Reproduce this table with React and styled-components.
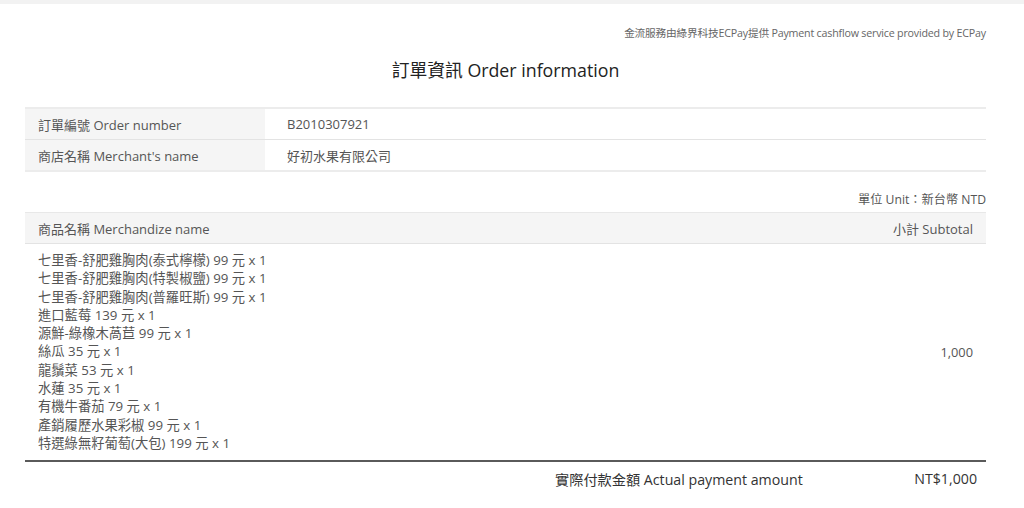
import React from 'react';
import styled, { createGlobalStyle } from 'styled-components';

const GlobalStyle = createGlobalStyle`
  html, body {
    margin: 0;
    padding: 0;
    background: #fff;
  }
  body {
    font-family: "Open Sans", "Noto Sans CJK TC", sans-serif;
    color: #555;
  }
`;

const TopBar = styled.div`
  height: 4px;
  background: #f2f2f2;
`;

const Wrapper = styled.div`
  padding: 0 38px 0 25px;
`;

const ProviderNote = styled.div`
  text-align: right;
  font-size: 10.7px;
  color: #666;
  margin-top: 22px;
  line-height: 14px;
  letter-spacing: -0.2px;
`;

const Title = styled.h1`
  margin: 18px 0 0;
  text-align: center;
  font-size: 17.8px;
  font-weight: 400;
  color: #222;
  line-height: 24px;
`;

const InfoTable = styled.div`
  margin-top: 25px;
  border-top: 2px solid #ececec;
`;

const InfoRow = styled.div`
  display: grid;
  grid-template-columns: 240px 1fr;
  height: 30px;
  border-bottom: 1px solid #e3e3e3;
  &:last-child {
    border-bottom-width: 2px;
    border-bottom-color: #ececec;
  }
`;

const InfoLabel = styled.div`
  background: #f5f5f5;
  padding-left: 13px;
  display: flex;
  align-items: center;
  font-size: 13px;
`;

const InfoValue = styled.div`
  padding-left: 22px;
  display: flex;
  align-items: center;
  font-size: 13px;
`;

const UnitNote = styled.div`
  text-align: right;
  font-size: 12.2px;
  margin-top: 20px;
  line-height: 16px;
  color: #555;
`;

const ItemHead = styled.div`
  margin-top: 4px;
  height: 30px;
  background: #f5f5f5;
  border-top: 1px solid #e8e8e8;
  border-bottom: 1px solid #e3e3e3;
  display: flex;
  justify-content: space-between;
  align-items: center;
  padding: 0 13px;
  font-size: 13px;
`;

const ItemBody = styled.div`
  display: flex;
  justify-content: space-between;
  align-items: center;
  padding: 7px 13px 8px;
  border-bottom: 2px solid #5a5a5a;
`;

const ItemList = styled.div`
  display: flex;
  flex-direction: column;
`;

const ItemLine = styled.div`
  font-size: 13.3px;
  line-height: 18.3px;
  color: #555;
`;

const Subtotal = styled.div`
  font-size: 12.8px;
  color: #555;
`;

const TotalRow = styled.div`
  display: grid;
  grid-template-columns: 1fr 250px 172px;
  align-items: center;
  height: 33px;
  padding-right: 9px;
  font-size: 14.2px;
  color: #333;
`;

const TotalLabel = styled.div`
  grid-column: 2;
`;

const TotalAmount = styled.div`
  grid-column: 3;
  text-align: right;
`;

const items = [
  '七里香-舒肥雞胸肉(泰式檸檬) 99 元 x 1',
  '七里香-舒肥雞胸肉(特製椒鹽) 99 元 x 1',
  '七里香-舒肥雞胸肉(普羅旺斯) 99 元 x 1',
  '進口藍莓 139 元 x 1',
  '源鮮-綠橡木萵苣 99 元 x 1',
  '絲瓜 35 元 x 1',
  '龍鬚菜 53 元 x 1',
  '水蓮 35 元 x 1',
  '有機牛番茄 79 元 x 1',
  '產銷履歷水果彩椒 99 元 x 1',
  '特選綠無籽葡萄(大包) 199 元 x 1',
];

export default function App() {
  return (
    <>
      <GlobalStyle />
      <TopBar />
      <Wrapper>
        <ProviderNote>
          金流服務由綠界科技ECPay提供 Payment cashflow service provided by ECPay
        </ProviderNote>
        <Title>訂單資訊 Order information</Title>

        <InfoTable>
          <InfoRow>
            <InfoLabel>訂單編號 Order number</InfoLabel>
            <InfoValue>B2010307921</InfoValue>
          </InfoRow>
          <InfoRow>
            <InfoLabel>商店名稱 Merchant's name</InfoLabel>
            <InfoValue>好初水果有限公司</InfoValue>
          </InfoRow>
        </InfoTable>

        <UnitNote>單位 Unit：新台幣 NTD</UnitNote>

        <ItemHead>
          <span>商品名稱 Merchandize name</span>
          <span>小計 Subtotal</span>
        </ItemHead>
        <ItemBody>
          <ItemList>
            {items.map((item) => (
              <ItemLine key={item}>{item}</ItemLine>
            ))}
          </ItemList>
          <Subtotal>1,000</Subtotal>
        </ItemBody>

        <TotalRow>
          <TotalLabel>實際付款金額 Actual payment amount</TotalLabel>
          <TotalAmount>NT$1,000</TotalAmount>
        </TotalRow>
      </Wrapper>
    </>
  );
}
